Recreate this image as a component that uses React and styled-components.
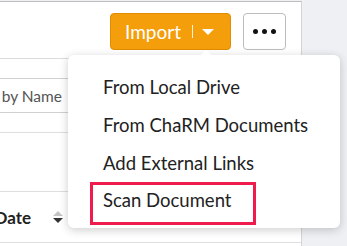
import React from "react";
import styled, { createGlobalStyle } from "styled-components";

const GlobalStyle = createGlobalStyle`
  html, body {
    margin: 0;
    padding: 0;
    background: #eef0f4;
    font-family: Lato, "Open Sans", sans-serif;
  }
`;

const Page = styled.div`
  position: relative;
  width: 347px;
  height: 246px;
  overflow: hidden;
  background: #eef0f4;
`;

const Panel = styled.div`
  width: 301px;
  height: 245px;
  margin-top: 1px;
  background: #fff;
  border-top: 1px solid #bdbdbd;
  border-right: 1px solid #d4d4d4;
`;

const Toolbar = styled.div`
  display: flex;
  justify-content: flex-end;
  align-items: flex-start;
  gap: 12px;
  height: 45px;
  padding: 11px 15px 0 0;
  border-bottom: 1px solid #dcdcdc;
`;

const ImportButton = styled.button`
  display: flex;
  align-items: center;
  height: 37px;
  padding: 0 16px 0 14px;
  border: 1px solid #e08d00;
  border-radius: 4px;
  background: #f59e0b;
  color: #fff;
  font-family: Lato, sans-serif;
  font-size: 19px;
  cursor: pointer;
`;

const Divider = styled.span`
  width: 1px;
  height: 13px;
  margin: 0 9px 0 11px;
  background: #fff3d6;
`;

const MoreButton = styled.button`
  display: flex;
  align-items: center;
  justify-content: center;
  gap: 4px;
  width: 43px;
  height: 37px;
  border: 1px solid #bcbcbc;
  border-radius: 4px;
  background: #fff;
  cursor: pointer;
`;

const Dot = styled.span`
  width: 5px;
  height: 5px;
  border-radius: 50%;
  background: #111;
`;

const FilterBar = styled.div`
  padding: 19px 0;
  border-bottom: 1px solid #dedede;
`;

const Clip = styled.div`
  display: flex;
  justify-content: flex-end;
  width: ${({ $width }) => $width}px;
  overflow: hidden;
`;

const SearchField = styled.div`
  flex-shrink: 0;
  display: flex;
  align-items: center;
  height: 33px;
  padding: 0 37px 0 12px;
  border: 1px solid #d0d0d0;
  color: #555;
  font-size: 15.5px;
  white-space: nowrap;
`;

const Spacer = styled.div`
  height: 58px;
  border-bottom: 1px solid #dedede;
`;

const HeaderRow = styled.div`
  height: 50px;
  border-bottom: 1px solid #dedede;
`;

const HeaderCell = styled.div`
  display: flex;
  align-items: center;
  justify-content: flex-end;
  height: 100%;
  width: 68px;
  padding-right: 5px;
  box-sizing: border-box;
  overflow: hidden;
  & > * {
    flex-shrink: 0;
  }
`;

const HeaderLabel = styled.span`
  margin-right: 22px;
  color: #222;
  font-size: 17px;
  font-weight: 700;
  white-space: nowrap;
`;

const Menu = styled.div`
  position: absolute;
  left: 68px;
  top: 55px;
  width: 272px;
  box-sizing: border-box;
  padding: 13px 0 3px 22px;
  background: #fff;
  border-radius: 6px;
  box-shadow: 0 2px 10px rgba(0, 0, 0, 0.2);
  &::before {
    content: "";
    position: absolute;
    top: -5px;
    left: 133px;
    border: 5px solid transparent;
    border-top: 0;
    border-bottom-color: #fff;
  }
`;

const MenuItem = styled.div`
  width: fit-content;
  padding: ${({ $marked }) => ($marked ? "0 22px 7px 10px" : "0 13px")};
  border: ${({ $marked }) => ($marked ? "3px solid #ee1b4c" : "none")};
  line-height: ${({ $marked }) => ($marked ? 30 : 38)}px;
  color: #222;
  font-size: 18.5px;
  white-space: nowrap;
  cursor: pointer;
`;

const SortIcon = () => (
  <svg width="10" height="13" viewBox="0 0 10 13">
    <path d="M5 0 L10 5 L0 5 Z" fill="#c4c4c4" />
    <path d="M0 7 L10 7 L5 12 Z" fill="#333" />
  </svg>
);

const Caret = () => (
  <svg width="12" height="6" viewBox="0 0 12 6">
    <path d="M0 0 L12 0 L6 6 Z" fill="#fff" />
  </svg>
);

const items = ["From Local Drive", "From ChaRM Documents", "Add External Links"];

export default function App() {
  return (
    <Page>
      <GlobalStyle />
      <Panel>
        <Toolbar>
          <ImportButton>
            Import
            <Divider />
            <Caret />
          </ImportButton>
          <MoreButton>
            <Dot />
            <Dot />
            <Dot />
          </MoreButton>
        </Toolbar>
        <FilterBar>
          <Clip $width={100}>
            <SearchField>Search by Name</SearchField>
          </Clip>
        </FilterBar>
        <Spacer />
        <HeaderRow>
          <HeaderCell>
            <HeaderLabel>Date</HeaderLabel>
            <SortIcon />
          </HeaderCell>
        </HeaderRow>
      </Panel>
      <Menu>
        {items.map((label) => (
          <MenuItem key={label}>{label}</MenuItem>
        ))}
        <MenuItem $marked>Scan Document</MenuItem>
      </Menu>
    </Page>
  );
}
